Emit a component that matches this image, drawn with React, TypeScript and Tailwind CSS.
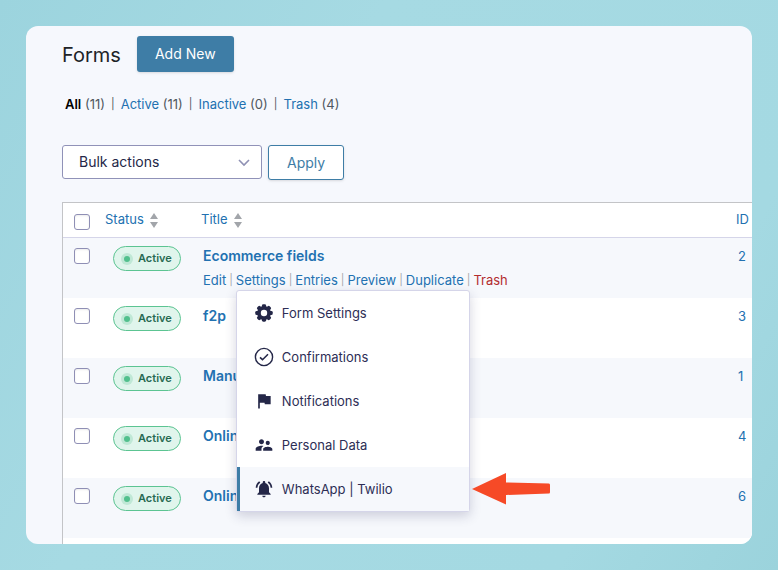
import { ReactNode } from "react";
import { MdFlag, MdNotificationsActive, MdSupervisorAccount } from "react-icons/md";

interface FormEntry {
  id: number;
  title: string;
}

const forms: FormEntry[] = [
  { id: 2, title: "Ecommerce fields" },
  { id: 3, title: "f2p" },
  { id: 1, title: "Manu" },
  { id: 4, title: "Onlin" },
  { id: 6, title: "Onlin" },
];

const filters = [
  { label: "All", count: 11, current: true },
  { label: "Active", count: 11 },
  { label: "Inactive", count: 0 },
  { label: "Trash", count: 4 },
];

const rowActions = ["Edit", "Settings", "Entries", "Preview", "Duplicate", "Trash"];

const GearIcon = () => (
  <svg viewBox="0 0 20 20" className="size-5" fill="currentColor">
    <g>
      {[0, 45, 90, 135].map((angle) => (
        <rect key={angle} x="7.9" y="1.3" width="4.2" height="17.4" rx="1.4" transform={`rotate(${angle} 10 10)`} />
      ))}
      <circle cx="10" cy="10" r="6.9" />
    </g>
    <circle cx="10" cy="10" r="3.2" fill="#fff" />
  </svg>
);

const CheckIcon = () => (
  <svg viewBox="0 0 20 20" className="size-5" fill="none" stroke="currentColor" strokeWidth="1.4">
    <circle cx="10" cy="10" r="8.6" />
    <path d="M6 10.3 8.5 12.7 14 7.3" strokeWidth="1.6" />
  </svg>
);

const menuItems: { label: string; icon: ReactNode; active?: boolean }[] = [
  { label: "Form Settings", icon: <GearIcon /> },
  { label: "Confirmations", icon: <CheckIcon /> },
  { label: "Notifications", icon: <MdFlag className="size-5" /> },
  { label: "Personal Data", icon: <MdSupervisorAccount className="size-5" /> },
  { label: "WhatsApp | Twilio", icon: <MdNotificationsActive className="size-5" />, active: true },
];

const SortIcon = () => (
  <svg viewBox="0 0 8 15" className="h-[15px] w-2" fill="#a2a5aa">
    <path d="M4 0 8 6H0ZM0 9H8L4 15Z" />
  </svg>
);

const Checkbox = ({ label }: { label: string }) => (
  <input
    type="checkbox"
    aria-label={label}
    className="block size-4 appearance-none rounded-[3px] border border-[#8f8fb5] bg-white shadow-[inset_0_1px_2px_rgba(0,0,0,0.08)] checked:bg-[#3e7da6]"
  />
);

const StatusBadge = () => (
  <button className="ml-2 flex h-[25px] items-center gap-[5px] rounded-full border border-[#5cc492] bg-[#e0f5ec] pr-2 pl-[7px] text-[11px] font-semibold text-[#276a52]">
    <span className="flex size-3 items-center justify-center rounded-full bg-[#c0e8d6]">
      <span className="size-[6px] rounded-full bg-[#52c08d]" />
    </span>
    Active
  </button>
);

const SettingsMenu = () => (
  <>
    <ul className="absolute top-full left-0 z-10 w-[234px] rounded-[3px] border border-[#d5d5e9] bg-white shadow-[0_4px_12px_rgba(40,40,90,0.2)]">
      {menuItems.map((item) => (
        <li key={item.label}>
          <a
            href="#"
            className={`flex h-11 items-center gap-2 pr-4 text-[#2d2e55] ${
              item.active ? "border-l-[3px] border-[#3e7da6] bg-[#f6f8fc] pl-[14px]" : "pl-[17px]"
            }`}
          >
            <span className="text-[#242748]">{item.icon}</span>
            {item.label}
          </a>
        </li>
      ))}
    </ul>
    {/* Arrow pointing at the active item */}
    <svg
      viewBox="0 0 78 32"
      className="absolute top-[203px] left-[236px] z-10 h-8 w-[78px]"
      fill="#f64a27"
    >
      <path d="M0 16 34 0V9.500L77 10.500Q78 10.500 78 12V19Q78 20.500 77 20.500L34 22V31.500Z" />
    </svg>
  </>
);

export default function App() {
  return (
    <main className="flex h-screen flex-col bg-[linear-gradient(120deg,#9cd4de_0%,#a6dae3_35%,#a4d9e2_80%,#9bd3dc_100%)] p-[26px] font-[Inter,sans-serif] text-[13px] text-[#50575e]">
      <div className="flex min-h-0 flex-1 flex-col overflow-hidden rounded-xl bg-[#f6f8fd] pt-[10px] pl-9">
        <header className="flex items-center gap-4">
          <h1 className="pt-[2px] text-xl text-[#1d2327]">Forms</h1>
          <button className="h-9 rounded-[3px] bg-[#3e7da6] px-[18px] text-sm text-white shadow-sm">Add New</button>
        </header>

        <nav className="mt-[22px] flex gap-[6px] pl-[3px] leading-5">
          {filters.map((filter, i) => (
            <span key={filter.label} className="flex gap-[6px]">
              {i > 0 && <span className="text-[11px]">|</span>}
              <span>
                <a href="#" className={filter.current ? "font-semibold text-black" : "text-[#2271b1]"}>
                  {filter.label}
                </a>{" "}
                ({filter.count})
              </span>
            </span>
          ))}
        </nav>

        <div className="mt-[31px] flex items-start gap-[6px]">
          <div className="relative">
            <select
              aria-label="Bulk actions"
              className="h-[34px] w-[200px] appearance-none rounded-[3px] border border-[#9092b8] bg-white pl-4 text-sm text-[#242748]"
            >
              <option>Bulk actions</option>
            </select>
            <svg
              viewBox="0 0 12 8"
              className="pointer-events-none absolute top-[14px] right-3 h-2 w-3"
              fill="none"
              stroke="#8f91b4"
              strokeWidth="1.6"
            >
              <path d="m1 1 5 5 5-5" />
            </svg>
          </div>
          <button className="h-[35px] rounded-[3px] border border-[#3e7da6] bg-white px-[18px] text-sm text-[#3e7da6] shadow-sm">
            Apply
          </button>
        </div>

        <div className="mt-[22px] flex-1 border-t border-l border-[#c3c4c7] bg-white">
          <table className="w-full table-fixed border-separate border-spacing-0 text-left">
            <thead>
              <tr className="h-[35px] text-[#2271b1] *:border-b *:border-[#d5d5e9]">
                <th className="w-[42px] pt-[3px] pl-[11px]">
                  <Checkbox label="Select all" />
                </th>
                <th className="w-24 font-normal">
                  <a href="#" className="flex items-center gap-[6px]">
                    Status <SortIcon />
                  </a>
                </th>
                <th className="font-normal">
                  <a href="#" className="flex items-center gap-[6px]">
                    Title <SortIcon />
                  </a>
                </th>
                <th className="w-4 font-normal">
                  <a href="#">ID</a>
                </th>
              </tr>
            </thead>
            <tbody>
              {forms.map((form, row) => (
                <tr key={form.id} className="h-[60px] align-top odd:bg-[#f6f8fc]">
                  <td className="pt-[10px] pl-[11px]">
                    <Checkbox label={`Select ${form.title}`} />
                  </td>
                  <td className="pt-2">
                    <StatusBadge />
                  </td>
                  <td className="pt-2 pl-[2px]">
                    <a href="#" className="block text-sm font-semibold text-[#2271b1]">
                      {form.title}
                    </a>
                    {row === 0 && (
                      <div className="mt-1 flex gap-[3px] leading-5 whitespace-nowrap">
                        {rowActions.map((action, i) => (
                          <span key={action} className="flex gap-[3px]">
                            {i > 0 && <span className="text-[11px] text-[#a7aaad]">|</span>}
                            <span className="relative">
                              <a href="#" className={action === "Trash" ? "text-[#b32d2e]" : "text-[#2271b1]"}>
                                {action}
                              </a>
                              {action === "Settings" && <SettingsMenu />}
                            </span>
                          </span>
                        ))}
                      </div>
                    )}
                  </td>
                  <td className="pt-2 pl-[2px] leading-5 text-[#2271b1]">{form.id}</td>
                </tr>
              ))}
            </tbody>
          </table>
        </div>
      </div>
    </main>
  );
}
